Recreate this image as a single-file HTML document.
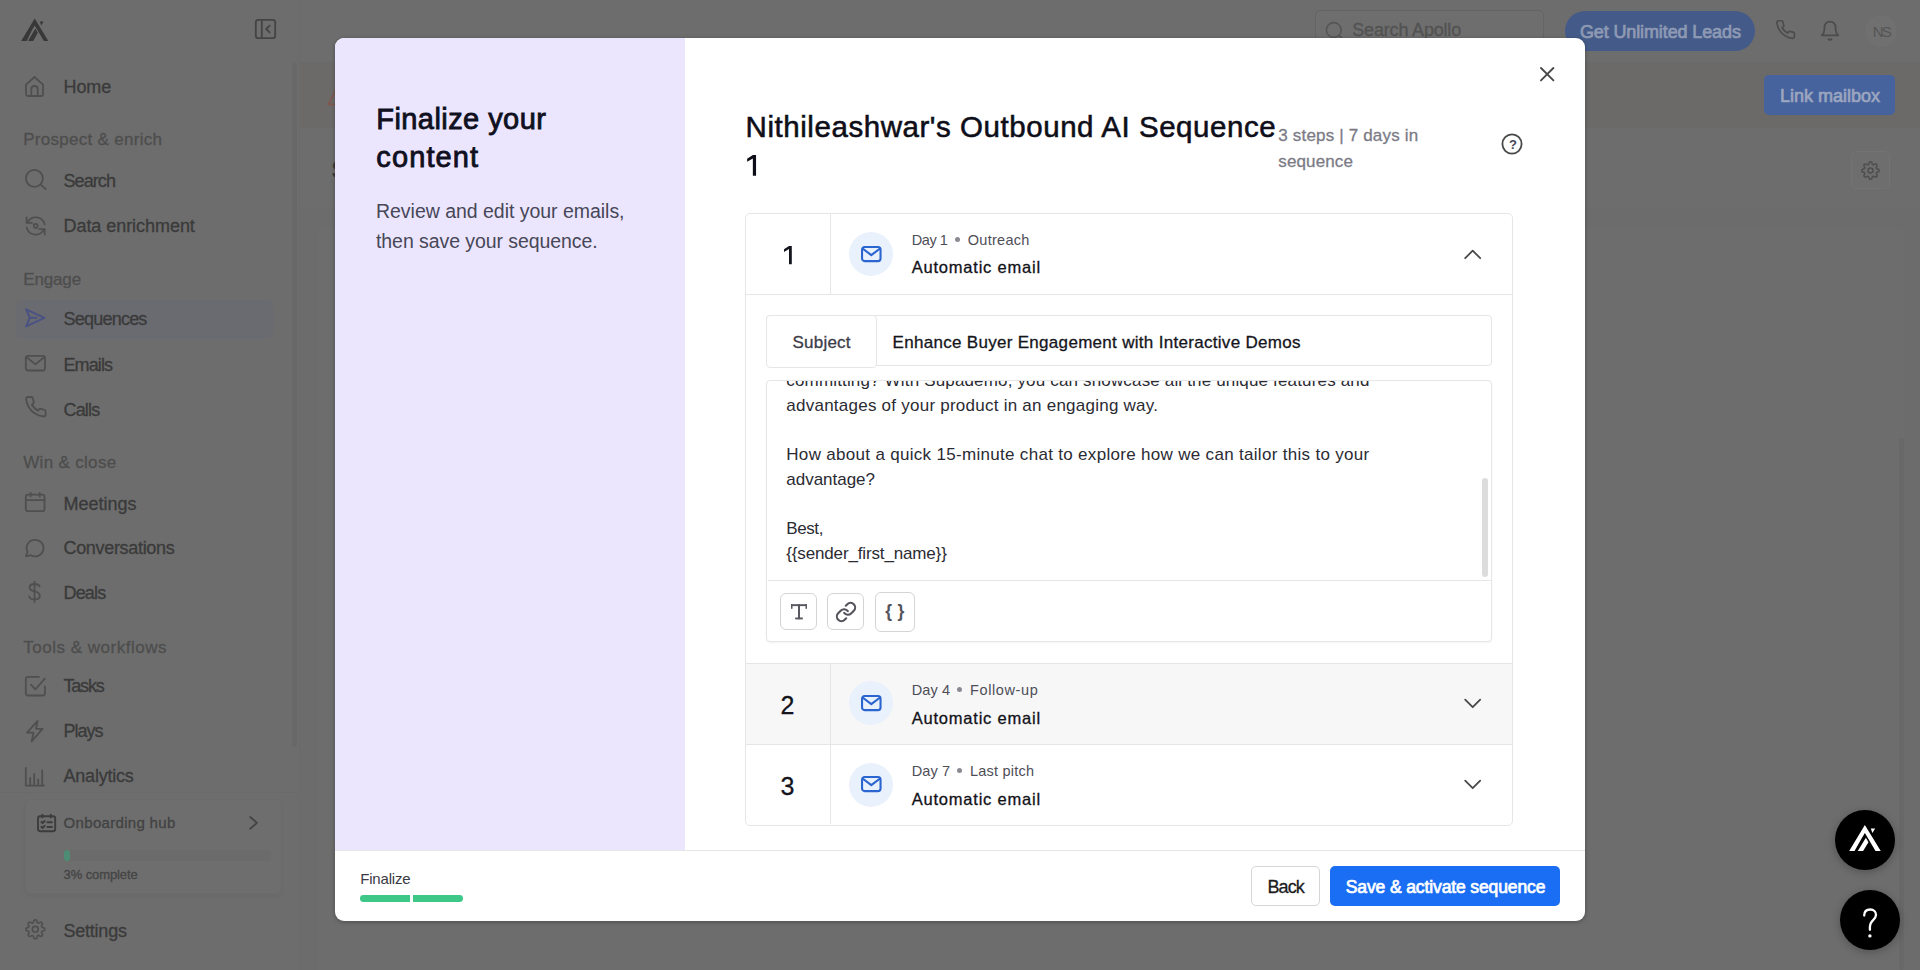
<!DOCTYPE html>
<html>
<head>
<meta charset="utf-8">
<title>Apollo - Finalize your content</title>
<style>
*{box-sizing:border-box;margin:0;padding:0}
html,body{width:1920px;height:970px;overflow:hidden;background:#6d6d6d;font-family:"Liberation Sans",sans-serif}
.a{position:absolute}
.t{position:absolute;white-space:nowrap;line-height:1}
svg{position:absolute;overflow:visible}
.med{-webkit-text-stroke:0.3px currentColor}
.med2{-webkit-text-stroke:0.55px currentColor}
.semi{-webkit-text-stroke:0.85px currentColor}
.semi2{-webkit-text-stroke:0.7px currentColor}
.nv{-webkit-text-stroke:0.3px currentColor}
</style>
</head>
<body>
<!-- sidebar -->
<div class="a" style="left:0;top:0;width:300px;height:970px;background:#6d6d6d"></div>
<div class="a" style="left:0.00px;top:791.50px;width:299.00px;height:178.50px;background:#6d6d6d;border-top:1px solid #6a6a6a"></div>
<div class="a" style="left:298.50px;top:0.00px;width:1.50px;height:970.00px;background:#6a6a6a"></div>
<div class="a" style="left:291.50px;top:63.00px;width:5.50px;height:684.00px;background:#686868;border-radius:3px"></div>
<div class="a" style="left:15.80px;top:300.20px;width:257.00px;height:39.00px;background:#6a6b70;border-radius:6px"></div>
<div class="a" style="left:24.50px;top:798.60px;width:257.50px;height:95.00px;background:#6e6e6e;border:1px solid #6b6b6b;border-radius:6px;box-shadow:0 3px 5px rgba(0,0,0,.035)"></div>
<div class="a" style="left:63.60px;top:850.00px;width:207.50px;height:11.00px;background:#6b6b6b;border-radius:3px"></div>
<div class="a" style="left:64.20px;top:850.00px;width:6.00px;height:11.00px;background:#4d8d75;border-radius:3px"></div>
<div class="t nv" style="left:63.50px;top:78.00px;font-size:18px;color:#3a3a3a;letter-spacing:-0.104px;">Home</div>
<div class="t nv" style="left:63.50px;top:171.50px;font-size:18px;color:#3a3a3a;letter-spacing:-0.924px;">Search</div>
<div class="t nv" style="left:63.50px;top:216.80px;font-size:18px;color:#3a3a3a;letter-spacing:-0.052px;">Data enrichment</div>
<div class="t nv" style="left:63.50px;top:310.20px;font-size:18px;color:#3a3a3a;letter-spacing:-0.775px;">Sequences</div>
<div class="t nv" style="left:63.50px;top:355.70px;font-size:18px;color:#3a3a3a;letter-spacing:-0.886px;">Emails</div>
<div class="t nv" style="left:63.50px;top:400.60px;font-size:18px;color:#3a3a3a;letter-spacing:-0.843px;">Calls</div>
<div class="t nv" style="left:63.50px;top:494.50px;font-size:18px;color:#3a3a3a;letter-spacing:-0.018px;">Meetings</div>
<div class="t nv" style="left:63.50px;top:539.40px;font-size:18px;color:#3a3a3a;letter-spacing:-0.320px;">Conversations</div>
<div class="t nv" style="left:63.50px;top:584.30px;font-size:18px;color:#3a3a3a;letter-spacing:-0.826px;">Deals</div>
<div class="t nv" style="left:63.50px;top:677.40px;font-size:18px;color:#3a3a3a;letter-spacing:-1.203px;">Tasks</div>
<div class="t nv" style="left:63.50px;top:722.30px;font-size:18px;color:#3a3a3a;letter-spacing:-0.983px;">Plays</div>
<div class="t nv" style="left:63.50px;top:767.30px;font-size:18px;color:#3a3a3a;letter-spacing:-0.215px;">Analytics</div>
<div class="t nv" style="left:63.50px;top:921.60px;font-size:18px;color:#3a3a3a;letter-spacing:-0.231px;">Settings</div>
<div class="t nv" style="left:23.20px;top:131.00px;font-size:17px;color:#4d4d4d;letter-spacing:0.289px;">Prospect &amp; enrich</div>
<div class="t nv" style="left:23.20px;top:270.70px;font-size:17px;color:#4d4d4d;letter-spacing:-0.138px;">Engage</div>
<div class="t nv" style="left:23.20px;top:453.70px;font-size:17px;color:#4d4d4d;letter-spacing:0.323px;">Win &amp; close</div>
<div class="t nv" style="left:23.20px;top:638.50px;font-size:17px;color:#4d4d4d;letter-spacing:0.511px;">Tools &amp; workflows</div>
<div class="t nv" style="left:63.60px;top:814.60px;font-size:15px;color:#424242;letter-spacing:0.315px;">Onboarding hub</div>
<div class="t nv" style="left:63.60px;top:867.50px;font-size:13px;color:#444444;letter-spacing:-0.105px;">3% complete</div>
<svg style="left:0.00px;top:0.00px;" width="60.00" height="60.00" viewBox="0 0 60 60"><g fill="#383838"><path d="M34.7 18.6 L48.4 41 L43.9 41 L34.7 25.6 L31.4 31.2 L26.7 41 L21.2 41 Z"/><path d="M35.4 28.6 L37.8 32.8 L33.2 41 L28.0 41 Z"/><path d="M39.8 21.6 L43.6 21.6 L41.2 25.6 Z"/></g></svg>
<svg style="left:255.00px;top:19.00px;" width="21.00" height="20.00" viewBox="0 0 21 20"><g stroke="#444" fill="none" stroke-width="1.8" stroke-linecap="round" stroke-linejoin="round"><rect x="0.8" y="0.8" width="19.4" height="18.4" rx="2.5"/><path d="M6.8 0.8V19.2"/><path d="M14.6 6.6 L11.2 10 L14.6 13.4"/></g></svg>
<svg style="left:25.00px;top:76.00px;" width="19.00" height="21.00" viewBox="0 0 19 21"><g stroke="#4f4f4f" fill="none" stroke-width="1.8" stroke-linecap="round" stroke-linejoin="round"><path d="M1 8.6 L9.5 1 L18 8.6 V18 a2 2 0 0 1 -2 2 H3 a2 2 0 0 1 -2 -2 Z"/><path d="M6.3 20 V13.2 a3.2 3.2 0 0 1 6.4 0 V20"/></g></svg>
<svg style="left:24.70px;top:168.80px;" width="21.50" height="21.20" viewBox="0 0 21.5 21.2"><g stroke="#4f4f4f" fill="none" stroke-width="1.8" stroke-linecap="round" stroke-linejoin="round"><circle cx="9.4" cy="9.3" r="8.5"/><path d="M15.6 15.4 L20.7 20.2"/></g></svg>
<svg style="left:24.70px;top:214.50px;" width="21.30" height="22.00" viewBox="0 0 21.3 22"><g stroke="#4f4f4f" fill="none" stroke-width="1.8" stroke-linecap="round" stroke-linejoin="round"><path d="M2.4 7.6 A9.2 9.2 0 0 1 19.6 9.4"/><path d="M18.9 14.4 A9.2 9.2 0 0 1 1.7 12.6"/><path d="M1.6 2.4 V7.8 H7"/><path d="M19.7 19.6 V14.2 H14.3"/><circle cx="10.7" cy="11" r="2"/></g></svg>
<svg style="left:24.70px;top:308.20px;" width="20.60" height="19.60" viewBox="0 0 20.6 19.6"><g stroke="#4a5284" fill="none" stroke-width="2" stroke-linecap="round" stroke-linejoin="round"><path d="M1.2 1.3 L19.4 9.8 L1.2 18.3 L4.8 9.8 Z"/><path d="M4.8 9.8 H11.4"/></g></svg>
<svg style="left:24.70px;top:355.30px;" width="20.80" height="16.30" viewBox="0 0 20.8 16.3"><g stroke="#4f4f4f" fill="none" stroke-width="1.8" stroke-linecap="round" stroke-linejoin="round"><rect x="0.8" y="0.8" width="19.2" height="14.7" rx="2.2"/><path d="M1.4 2 L10.4 9.4 L19.4 2"/></g></svg>
<svg style="left:23.60px;top:395.40px;" width="23.60" height="23.60" viewBox="0 0 24 24"><g stroke="#4f4f4f" fill="none" stroke-width="1.9" stroke-linecap="round" stroke-linejoin="round"><path d="M22 16.92v3a2 2 0 0 1-2.18 2 19.79 19.79 0 0 1-8.63-3.07 19.5 19.5 0 0 1-6-6 19.79 19.79 0 0 1-3.07-8.67A2 2 0 0 1 4.11 2h3a2 2 0 0 1 2 1.72 12.84 12.84 0 0 0 .7 2.81 2 2 0 0 1-.45 2.11L8.09 9.91a16 16 0 0 0 6 6l1.27-1.27a2 2 0 0 1 2.11-.45 12.84 12.84 0 0 0 2.81.7A2 2 0 0 1 22 16.92z"/></g></svg>
<svg style="left:24.70px;top:492.30px;" width="20.30" height="20.00" viewBox="0 0 20.3 20"><g stroke="#4f4f4f" fill="none" stroke-width="1.8" stroke-linecap="round" stroke-linejoin="round"><rect x="0.8" y="2.6" width="18.7" height="16.6" rx="2.2"/><path d="M0.8 8.2 H19.5"/><path d="M5.6 0.8 V4.4"/><path d="M14.7 0.8 V4.4"/></g></svg>
<svg style="left:24.70px;top:538.60px;" width="19.50" height="18.20" viewBox="0 0 19.5 18.2"><g stroke="#4f4f4f" fill="none" stroke-width="1.8" stroke-linecap="round" stroke-linejoin="round"><path d="M10.2 0.8 a8.3 8.3 0 1 1 -4.3 15.4 L0.9 17.3 L2.6 13 A8.3 8.3 0 0 1 10.2 0.8 Z"/></g></svg>
<svg style="left:28.20px;top:581.30px;" width="13.00" height="21.40" viewBox="0 0 13 21.4"><g stroke="#4f4f4f" fill="none" stroke-width="1.8" stroke-linecap="round" stroke-linejoin="round"><path d="M6.5 0.6 V20.8"/><path d="M11.6 5.4 C11 3.6 9 3 6.6 3 C3.8 3 1.6 4.2 1.6 6.6 C1.6 9.2 4 9.9 6.5 10.5 C9.2 11.1 11.8 12 11.8 14.7 C11.8 17.2 9.4 18.4 6.5 18.4 C3.8 18.4 1.6 17.4 1.1 15.4"/></g></svg>
<svg style="left:24.70px;top:675.70px;" width="20.70" height="20.30" viewBox="0 0 20.7 20.3"><g stroke="#4f4f4f" fill="none" stroke-width="1.8" stroke-linecap="round" stroke-linejoin="round"><path d="M19.9 10.4 V17.3 a2.2 2.2 0 0 1 -2.2 2.2 H3 a2.2 2.2 0 0 1 -2.2 -2.2 V3 a2.2 2.2 0 0 1 2.2 -2.2 H14"/><path d="M6 8.6 L10.4 13.4 L19.8 2.6"/></g></svg>
<svg style="left:26.00px;top:720.20px;" width="17.60" height="22.20" viewBox="0 0 17.6 22.2"><g stroke="#4f4f4f" fill="none" stroke-width="1.8" stroke-linecap="round" stroke-linejoin="round"><path d="M11.6 0.9 L1 12.6 H7.6 L5.6 21.3 L16.6 8.8 H10 Z"/></g></svg>
<svg style="left:24.70px;top:766.60px;" width="19.80" height="19.40" viewBox="0 0 19.8 19.4"><g stroke="#4f4f4f" fill="none" stroke-width="1.8" stroke-linecap="round" stroke-linejoin="round"><path d="M0.8 0.8 V18.6 H19"/><path d="M5.2 18 V11"/><path d="M9.2 18 V7"/><path d="M13.2 18 V12.6"/><path d="M17.2 18 V3.4"/></g></svg>
<svg style="left:36.60px;top:813.70px;" width="19.20" height="18.20" viewBox="0 0 19.2 18.2"><g stroke="#3c3c3c" fill="none" stroke-width="1.9" stroke-linecap="round" stroke-linejoin="round"><rect x="1" y="2.2" width="17.2" height="15" rx="2.2"/><path d="M5.4 0.8V3.4"/><path d="M13.8 0.8V3.4"/><path d="M4.4 8 L5.6 9.2 L7.6 7"/><path d="M10.4 8.2 H15"/><path d="M4.4 12.8 L5.6 14 L7.6 11.8"/><path d="M10.4 13 H15"/></g></svg>
<svg style="left:249.00px;top:816.20px;" width="9.50" height="13.80" viewBox="0 0 9.5 13.8"><g stroke="#444" fill="none" stroke-width="1.8" stroke-linecap="round" stroke-linejoin="round"><path d="M1.2 1 L8 6.9 L1.2 12.8"/></g></svg>
<svg style="left:25.00px;top:919.00px;" width="20.60" height="20.60" viewBox="0 0 24 24"><g stroke="#4f4f4f" fill="none" stroke-width="1.9" stroke-linecap="round" stroke-linejoin="round"><circle cx="12" cy="12" r="3.4"/><path d="M19.4 15a1.65 1.65 0 0 0 .33 1.82l.06.06a2 2 0 0 1 0 2.83 2 2 0 0 1-2.83 0l-.06-.06a1.65 1.65 0 0 0-1.82-.33 1.65 1.65 0 0 0-1 1.51V21a2 2 0 0 1-2 2 2 2 0 0 1-2-2v-.09A1.65 1.65 0 0 0 9 19.4a1.65 1.65 0 0 0-1.82.33l-.06.06a2 2 0 0 1-2.83 0 2 2 0 0 1 0-2.83l.06-.06a1.65 1.65 0 0 0 .33-1.82 1.65 1.65 0 0 0-1.51-1H3a2 2 0 0 1-2-2 2 2 0 0 1 2-2h.09A1.65 1.65 0 0 0 4.6 9a1.65 1.65 0 0 0-.33-1.82l-.06-.06a2 2 0 0 1 0-2.83 2 2 0 0 1 2.83 0l.06.06a1.65 1.65 0 0 0 1.82.33H9a1.65 1.65 0 0 0 1-1.51V3a2 2 0 0 1 2-2 2 2 0 0 1 2 2v.09a1.65 1.65 0 0 0 1 1.51 1.65 1.65 0 0 0 1.82-.33l.06-.06a2 2 0 0 1 2.83 0 2 2 0 0 1 0 2.83l-.06.06a1.65 1.65 0 0 0-.33 1.82V9a1.65 1.65 0 0 0 1.51 1H21a2 2 0 0 1 2 2 2 2 0 0 1-2 2h-.09a1.65 1.65 0 0 0-1.51 1z"/></g></svg>
<!-- main behind -->
<div class="a" style="left:300.00px;top:0.00px;width:1620.00px;height:62.00px;background:#6e6d6d"></div>
<div class="a" style="left:300.00px;top:62.00px;width:1620.00px;height:66.00px;background:#6c6a68"></div>
<div class="a" style="left:300.00px;top:128.00px;width:1620.00px;height:842.00px;background:#6c6c6c"></div>
<div class="a" style="left:300.00px;top:128.00px;width:1620.00px;height:80.00px;background:#6d6d6d"></div>
<div class="a" style="left:318.00px;top:228.00px;width:1587.00px;height:742.00px;background:#6d6d6d;border-radius:8px 8px 0 0"></div>
<div class="a" style="left:1898.50px;top:438.00px;width:5.00px;height:532.00px;background:#686868;border-radius:3px"></div>
<svg style="left:327.00px;top:84.00px;" width="22.00" height="22.00" viewBox="0 0 22 22"><path d="M11 2.4 L21 20.4 H1.2 Z" fill="none" stroke="#80584e" stroke-width="1.7" stroke-linejoin="round"/></svg>
<div class="a" style="left:1314.80px;top:10.20px;width:229.00px;height:42.00px;border:1px solid #646464;border-radius:5px;background:#6e6e6e"></div>
<svg style="left:1324.50px;top:20.50px;" width="20.00" height="20.00" viewBox="0 0 20 20"><circle cx="8.8" cy="9" r="7.4" fill="none" stroke="#565656" stroke-width="1.6"/><path d="M14 14.4 L18 18.4" stroke="#565656" stroke-width="1.6" stroke-linecap="round"/></svg>
<div class="a" style="left:1565.40px;top:11.00px;width:189.40px;height:39.60px;background:#445b89;border-radius:20px"></div>
<svg style="left:1774.50px;top:19.30px;" width="21.20" height="21.20" viewBox="0 0 24 24"><g stroke="#4c4c4c" fill="none" stroke-width="1.9" stroke-linecap="round" stroke-linejoin="round"><path d="M22 16.92v3a2 2 0 0 1-2.18 2 19.79 19.79 0 0 1-8.63-3.07 19.5 19.5 0 0 1-6-6 19.79 19.79 0 0 1-3.07-8.67A2 2 0 0 1 4.11 2h3a2 2 0 0 1 2 1.72 12.84 12.84 0 0 0 .7 2.81 2 2 0 0 1-.45 2.11L8.09 9.91a16 16 0 0 0 6 6l1.27-1.27a2 2 0 0 1 2.11-.45 12.84 12.84 0 0 0 2.81.7A2 2 0 0 1 22 16.92z"/></g></svg>
<svg style="left:1819.00px;top:18.60px;" width="22.00" height="23.40" viewBox="0 0 24 24"><g stroke="#4c4c4c" fill="none" stroke-width="1.9" stroke-linecap="round" stroke-linejoin="round"><path d="M18 8A6 6 0 0 0 6 8c0 7-3 9-3 9h18s-3-2-3-9"/><path d="M13.73 21a2 2 0 0 1-3.46 0"/></g></svg>
<div class="a" style="left:1865.00px;top:15.00px;width:32.00px;height:32.00px;background:#707070;border-radius:16px"></div>
<div class="a" style="left:1764.00px;top:75.00px;width:131.00px;height:40.00px;background:#46639e;border-radius:5px"></div>
<div class="a" style="left:1850.70px;top:150.70px;width:39.30px;height:38.60px;border:1px solid #737373;border-radius:5px;background:#6e6e6e"></div>
<svg style="left:1861.00px;top:160.50px;" width="19.00" height="19.00" viewBox="0 0 24 24"><g stroke="#4e4e4e" fill="none" stroke-width="1.9" stroke-linecap="round" stroke-linejoin="round"><circle cx="12" cy="12" r="3.2"/><path d="M19.4 15a1.65 1.65 0 0 0 .33 1.82l.06.06a2 2 0 0 1 0 2.83 2 2 0 0 1-2.83 0l-.06-.06a1.65 1.65 0 0 0-1.82-.33 1.65 1.65 0 0 0-1 1.51V21a2 2 0 0 1-2 2 2 2 0 0 1-2-2v-.09A1.65 1.65 0 0 0 9 19.4a1.65 1.65 0 0 0-1.82.33l-.06.06a2 2 0 0 1-2.83 0 2 2 0 0 1 0-2.83l.06-.06a1.65 1.65 0 0 0 .33-1.82 1.65 1.65 0 0 0-1.51-1H3a2 2 0 0 1-2-2 2 2 0 0 1 2-2h.09A1.65 1.65 0 0 0 4.6 9a1.65 1.65 0 0 0-.33-1.82l-.06-.06a2 2 0 0 1 0-2.83 2 2 0 0 1 2.83 0l.06.06a1.65 1.65 0 0 0 1.82.33H9a1.65 1.65 0 0 0 1-1.51V3a2 2 0 0 1 2-2 2 2 0 0 1 2 2v.09a1.65 1.65 0 0 0 1 1.51 1.65 1.65 0 0 0 1.82-.33l.06-.06a2 2 0 0 1 2.83 0 2 2 0 0 1 0 2.83l-.06.06a1.65 1.65 0 0 0-.33 1.82V9a1.65 1.65 0 0 0 1.51 1H21a2 2 0 0 1 2 2 2 2 0 0 1-2 2h-.09a1.65 1.65 0 0 0-1.51 1z"/></g></svg>
<div class="t " style="left:331.50px;top:158.50px;font-size:23px;color:#3a3a3a;font-weight:700;">S</div>
<div class="t nv" style="left:1352.30px;top:21.20px;font-size:18px;color:#525252;letter-spacing:-0.183px;">Search Apollo</div>
<div class="t semi2" style="left:1579.90px;top:22.60px;font-size:18px;color:#8e9ab4;letter-spacing:-0.115px;">Get Unlimited Leads</div>
<div class="t " style="left:1872.70px;top:23.60px;font-size:15px;color:#555555;letter-spacing:-1.772px;">NS</div>
<div class="t semi2" style="left:1780.00px;top:87.00px;font-size:18px;color:#9ba6bf;letter-spacing:-0.004px;">Link mailbox</div>
<!-- modal -->
<div class="a" style="left:335.00px;top:38.00px;width:1250.00px;height:883.00px;background:#fff;border-radius:9px;box-shadow:0 1px 4px rgba(0,0,0,.3)"></div>
<div class="a" style="left:335.00px;top:38.00px;width:350.00px;height:812.40px;background:#ebe6fd;border-radius:9px 0 0 0"></div>
<div class="a" style="left:335.00px;top:850.40px;width:1250.00px;height:1.00px;background:#e6e6e6"></div>
<div class="a" style="left:360.00px;top:895.30px;width:50.00px;height:6.70px;background:#3ec887;border-radius:3.4px 0 0 3.4px"></div>
<div class="a" style="left:413.00px;top:895.30px;width:50.00px;height:6.70px;background:#3ec887;border-radius:0 3.4px 3.4px 0"></div>
<div class="a" style="left:1251.30px;top:866.20px;width:68.30px;height:39.80px;border:1px solid #d6d6d6;border-radius:5px;background:#fff"></div>
<div class="a" style="left:1330.00px;top:866.20px;width:230.00px;height:39.80px;background:#1a6ef4;border-radius:5px"></div>
<svg style="left:1540.20px;top:66.80px;" width="14.40" height="14.40" viewBox="0 0 14.4 14.4"><path d="M1 1 L13.4 13.4 M13.4 1 L1 13.4" stroke="#494949" stroke-width="1.9" stroke-linecap="round"/></svg>
<svg style="left:746.60px;top:155.30px;" width="9.20" height="20.80" viewBox="0 0 7.8 18.2"><path fill="#0e0e18" d="M5.0 0 H7.8 V18.2 H5.0 V3.0 L0 5.9 V3.3 Z"/></svg>
<svg style="left:1501.40px;top:133.40px;" width="22.00" height="22.00" viewBox="0 0 22 22"><circle cx="11" cy="11" r="9.6" fill="none" stroke="#494949" stroke-width="1.8"/></svg>
<div class="a" style="left:745.00px;top:213.00px;width:768.00px;height:612.50px;border:1px solid #e6e6e6;border-radius:5px;background:#fff"></div>
<div class="a" style="left:746.00px;top:663.40px;width:766.00px;height:81.00px;background:#f7f7f7"></div>
<div class="a" style="left:746.00px;top:294.20px;width:766.00px;height:1.00px;background:#e6e6e6"></div>
<div class="a" style="left:746.00px;top:663.40px;width:766.00px;height:1.00px;background:#e6e6e6"></div>
<div class="a" style="left:746.00px;top:744.20px;width:766.00px;height:1.00px;background:#e6e6e6"></div>
<div class="a" style="left:830.00px;top:214.00px;width:1.00px;height:80.20px;background:#e6e6e6"></div>
<div class="a" style="left:830.00px;top:664.40px;width:1.00px;height:79.80px;background:#e6e6e6"></div>
<div class="a" style="left:830.00px;top:745.20px;width:1.00px;height:79.30px;background:#e6e6e6"></div>
<svg style="left:783.70px;top:245.90px;" width="7.80" height="18.20" viewBox="0 0 7.8 18.2"><path fill="#14141c" d="M5.0 0 H7.8 V18.2 H5.0 V3.0 L0 5.9 V3.3 Z"/></svg>
<div class="a" style="left:849.20px;top:231.70px;width:44.00px;height:44.00px;background:#e9f1fc;border-radius:22px"></div><svg style="left:860.90px;top:245.60px;" width="20.60" height="16.20" viewBox="0 0 20.6 16.2"><g fill="none" stroke="#2b65cf" stroke-width="2.1" stroke-linejoin="round" stroke-linecap="round"><rect x="1.05" y="1.05" width="18.5" height="14.1" rx="2.6"/><path d="M2.2 3 L10.3 9.2 L18.4 3"/></g></svg>
<div class="a" style="left:955.10px;top:237.10px;width:4.80px;height:4.80px;background:#8a8a92;border-radius:3px"></div>
<svg style="left:1463.50px;top:249.20px;" width="17.40" height="10.80" viewBox="0 0 17.4 10.8"><path d="M1.2 9.2 L8.7 1.6 L16.2 9.2" fill="none" stroke="#494949" stroke-width="1.8" stroke-linecap="round" stroke-linejoin="round"/></svg>
<div class="a" style="left:849.20px;top:681.40px;width:44.00px;height:44.00px;background:#e9f1fc;border-radius:22px"></div><svg style="left:860.90px;top:695.30px;" width="20.60" height="16.20" viewBox="0 0 20.6 16.2"><g fill="none" stroke="#2b65cf" stroke-width="2.1" stroke-linejoin="round" stroke-linecap="round"><rect x="1.05" y="1.05" width="18.5" height="14.1" rx="2.6"/><path d="M2.2 3 L10.3 9.2 L18.4 3"/></g></svg>
<div class="a" style="left:957.40px;top:686.80px;width:4.80px;height:4.80px;background:#8a8a92;border-radius:3px"></div>
<svg style="left:1463.50px;top:697.90px;" width="17.40" height="10.80" viewBox="0 0 17.4 10.8"><path d="M1.2 1.6 L8.7 9.2 L16.2 1.6" fill="none" stroke="#494949" stroke-width="1.8" stroke-linecap="round" stroke-linejoin="round"/></svg>
<div class="a" style="left:849.20px;top:762.50px;width:44.00px;height:44.00px;background:#e9f1fc;border-radius:22px"></div><svg style="left:860.90px;top:776.40px;" width="20.60" height="16.20" viewBox="0 0 20.6 16.2"><g fill="none" stroke="#2b65cf" stroke-width="2.1" stroke-linejoin="round" stroke-linecap="round"><rect x="1.05" y="1.05" width="18.5" height="14.1" rx="2.6"/><path d="M2.2 3 L10.3 9.2 L18.4 3"/></g></svg>
<div class="a" style="left:957.40px;top:767.90px;width:4.80px;height:4.80px;background:#8a8a92;border-radius:3px"></div>
<svg style="left:1463.50px;top:779.00px;" width="17.40" height="10.80" viewBox="0 0 17.4 10.8"><path d="M1.2 1.6 L8.7 9.2 L16.2 1.6" fill="none" stroke="#494949" stroke-width="1.8" stroke-linecap="round" stroke-linejoin="round"/></svg>
<div class="a" style="left:766.30px;top:315.00px;width:725.40px;height:51.30px;border:1px solid #e6e6e6;border-radius:4px;background:#fff"></div>
<div class="a" style="left:766.30px;top:315.00px;width:110.70px;height:52.80px;border:1px solid #e6e6e6;border-radius:4px;background:#fff"></div>
<div class="a" style="left:766.30px;top:380.00px;width:725.40px;height:262.40px;border:1px solid #e6e6e6;border-radius:4px;background:#fff;box-shadow:0 1px 2px rgba(0,0,0,.05)"></div>
<div class="a" style="left:767.60px;top:580.20px;width:723.00px;height:1.00px;background:#e6e6e6"></div>
<div class="t semi" style="left:376.30px;top:105.20px;font-size:29px;color:#10101f;letter-spacing:0.430px;">Finalize your</div>
<div class="t semi" style="left:376.30px;top:143.30px;font-size:29px;color:#10101f;letter-spacing:1.123px;">content</div>
<div class="t " style="left:376.00px;top:201.70px;font-size:19.5px;color:#474757;letter-spacing:-0.028px;">Review and edit your emails,</div>
<div class="t " style="left:376.00px;top:231.80px;font-size:19.5px;color:#474757;letter-spacing:-0.072px;">then save your sequence.</div>
<div class="t " style="left:360.30px;top:871.00px;font-size:15px;color:#3a3a44;letter-spacing:-0.211px;">Finalize</div>
<div class="t med" style="left:1267.50px;top:878.00px;font-size:18px;color:#1c1c1c;letter-spacing:-0.883px;">Back</div>
<div class="t semi2" style="left:1345.80px;top:879.00px;font-size:17.5px;color:#fff;letter-spacing:-0.119px;">Save &amp; activate sequence</div>
<div class="t med2" style="left:745.60px;top:112.30px;font-size:29.5px;color:#0e0e18;letter-spacing:0.552px;">Nithileashwar&#x27;s Outbound AI Sequence</div>
<div class="t med" style="left:1278.30px;top:126.80px;font-size:17px;color:#7b7b86;letter-spacing:0.173px;">3 steps | 7 days in</div>
<div class="t med" style="left:1278.30px;top:153.00px;font-size:17px;color:#7b7b86;letter-spacing:0.121px;">sequence</div>
<div class="t " style="left:1509.00px;top:138.20px;font-size:13px;color:#454555;font-weight:700;">?</div>
<div class="t " style="left:911.70px;top:233.00px;font-size:14.5px;color:#4e4e57;letter-spacing:-0.418px;">Day 1</div>
<div class="t " style="left:967.80px;top:233.00px;font-size:14.5px;color:#4e4e57;letter-spacing:0.280px;">Outreach</div>
<div class="t med" style="left:911.70px;top:259.40px;font-size:16.5px;color:#121218;letter-spacing:0.787px;">Automatic email</div>
<div class="t med" style="left:780.60px;top:692.70px;font-size:25px;color:#14141c;">2</div>
<div class="t " style="left:911.70px;top:682.70px;font-size:14.5px;color:#4e4e57;letter-spacing:0.122px;">Day 4</div>
<div class="t " style="left:970.00px;top:682.70px;font-size:14.5px;color:#4e4e57;letter-spacing:0.605px;">Follow-up</div>
<div class="t med" style="left:911.70px;top:709.90px;font-size:16.5px;color:#121218;letter-spacing:0.787px;">Automatic email</div>
<div class="t med" style="left:780.60px;top:773.80px;font-size:25px;color:#14141c;">3</div>
<div class="t " style="left:911.70px;top:763.80px;font-size:14.5px;color:#4e4e57;letter-spacing:0.122px;">Day 7</div>
<div class="t " style="left:970.00px;top:763.80px;font-size:14.5px;color:#4e4e57;letter-spacing:0.212px;">Last pitch</div>
<div class="t med" style="left:911.70px;top:791.00px;font-size:16.5px;color:#121218;letter-spacing:0.787px;">Automatic email</div>
<div class="t med" style="left:792.50px;top:333.50px;font-size:17px;color:#3c3c48;letter-spacing:0.228px;">Subject</div>
<div class="t med" style="left:892.50px;top:334.00px;font-size:17px;color:#15151c;letter-spacing:0.303px;">Enhance Buyer Engagement with Interactive Demos</div>
<div class="a" style="left:767.6px;top:381.2px;width:712px;height:198.6px;overflow:hidden">
<div class="t " style="left:18.70px;top:-9.37px;font-size:17px;color:#2b2b33;letter-spacing:0.163px;">committing? With Supademo, you can showcase all the unique features and</div>
<div class="t " style="left:18.70px;top:15.40px;font-size:17px;color:#2b2b33;letter-spacing:0.245px;">advantages of your product in an engaging way.</div>
<div class="t " style="left:18.70px;top:64.94px;font-size:17px;color:#2b2b33;letter-spacing:0.310px;">How about a quick 15-minute chat to explore how we can tailor this to your</div>
<div class="t " style="left:18.70px;top:89.71px;font-size:17px;color:#2b2b33;letter-spacing:-0.017px;">advantage?</div>
<div class="t " style="left:18.70px;top:139.25px;font-size:17px;color:#2b2b33;letter-spacing:-0.410px;">Best,</div>
<div class="t " style="left:18.70px;top:164.02px;font-size:17px;color:#2b2b33;letter-spacing:-0.148px;">{{sender_first_name}}</div>
</div>
<div class="a" style="left:1482.00px;top:478.30px;width:6.30px;height:98.70px;background:#dcdcdc;border-radius:3px"></div>
<div class="a" style="left:780.30px;top:593.10px;width:36.50px;height:36.50px;border:1px solid #d4d4d4;border-radius:6px;background:#fff"></div>
<div class="a" style="left:827.20px;top:593.10px;width:37.30px;height:36.50px;border:1px solid #d4d4d4;border-radius:6px;background:#fff"></div>
<div class="a" style="left:875.10px;top:592.20px;width:39.60px;height:39.60px;border:1px solid #d4d4d4;border-radius:6px;background:#fff"></div>
<svg style="left:790.60px;top:603.80px;" width="16.00" height="15.40" viewBox="0 0 16 15.4"><g fill="#575760"><rect x="0" y="0.2" width="16" height="1.9"/><rect x="0" y="0.2" width="1.5" height="4.6"/><rect x="14.5" y="0.2" width="1.5" height="4.6"/><rect x="7" y="0.2" width="2" height="15"/><rect x="4.2" y="13.5" width="7.6" height="1.9"/></g></svg>
<svg style="left:835.20px;top:600.60px;" width="22.00" height="22.00" viewBox="0 0 24 24"><g fill="none" stroke="#54545c" stroke-width="2.3" stroke-linecap="round" stroke-linejoin="round"><path d="M10 13a5 5 0 0 0 7.54.54l3-3a5 5 0 0 0-7.07-7.07l-1.72 1.71"/><path d="M14 11a5 5 0 0 0-7.54-.54l-3 3a5 5 0 0 0 7.07 7.07l1.71-1.71"/></g></svg>
<div class="t " style="left:885.30px;top:603.20px;font-size:17.5px;color:#54545c;font-weight:700;letter-spacing:0.239px;">{ }</div>
<!-- floating -->
<div class="a" style="left:1835.00px;top:810.00px;width:60.00px;height:60.00px;background:#000;border-radius:30px;box-shadow:0 2px 8px rgba(0,0,0,.25)"></div>
<svg style="left:0.00px;top:0.00px;pointer-events:none" width="1920.00" height="970.00" viewBox="0 0 1920 970"><g fill="#fff" transform="translate(1824.6,803.4) scale(1.16)"><path d="M34.7 18.6 L48.4 41 L43.9 41 L34.7 25.6 L30.9 32 L25.8 41 L21.2 41 Z"/><path d="M35.6 29.6 L37.8 33.4 L33.2 41 L28.6 41 Z"/><path d="M39.8 21.6 L43.6 21.6 L41.2 25.6 Z"/></g></svg>
<div class="a" style="left:1840.00px;top:889.60px;width:60.00px;height:60.00px;background:#000;border-radius:30px;box-shadow:0 2px 8px rgba(0,0,0,.25)"></div>
<svg style="left:0.00px;top:0.00px;" width="1920.00" height="970.00" viewBox="0 0 1920 970"><path d="M1864.2 915.6 C1864.2 911.6 1866.8 909.5 1870.3 909.5 C1873.7 909.5 1876 911.7 1876 914.7 C1876 917.9 1874 919.3 1872.2 921.1 C1870.6 922.7 1869.9 924.3 1869.9 926.7 L1869.9 929.8" fill="none" stroke="#fff" stroke-width="2.3" stroke-linecap="round"/><circle cx="1869.9" cy="935.9" r="1.7" fill="#fff"/></svg>

</body>
</html>
